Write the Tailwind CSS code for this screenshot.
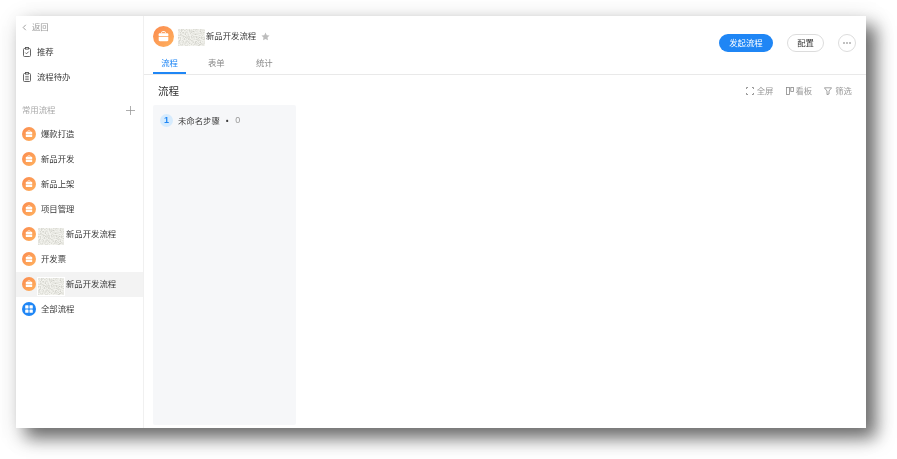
<!DOCTYPE html>
<html lang="zh">
<head>
    <meta charset="UTF-8">
    <title>流程</title>
    <script src="https://cdn.jsdelivr.net/npm/@tailwindcss/browser@4"></script>
</head>
<body class="bg-white w-[897px] h-[459px] overflow-hidden font-['Noto_Sans_CJK_SC','Noto_Sans',sans-serif]">
    <svg class="absolute w-0 h-0">
        <defs>
            <filter id="noise" x="0" y="0" width="100%" height="100%"><feTurbulence type="fractalNoise" baseFrequency="0.8" numOctaves="2" seed="4"/><feColorMatrix values="0 0 0 0 0.6 0 0 0 0 0.6 0 0 0 0 0.55 2.2 0 0 0 -0.85"/></filter>
            <linearGradient id="orange" x1="0" y1="0" x2="1" y2="1"><stop offset="0" stop-color="#fb8a4e"/><stop offset="1" stop-color="#ffb25f"/></linearGradient>
            <g id="case">
                <circle cx="12" cy="12" r="12" fill="url(#orange)"/>
                <path d="M9.800 8.200V7.400c0-.6.4-1 1-1h2.400c.6 0 1 .4 1 1v.8" fill="none" stroke="#fff" stroke-width="1.100"/>
                <path d="M6.500 9.500c0-.7.5-1.200 1.200-1.200h8.600c.7 0 1.200.5 1.200 1.200v2.300h-11z" fill="#fff"/>
                <path d="M6.500 12.700h11v3.400c0 .7-.5 1.200-1.200 1.200H7.700c-.7 0-1.200-.5-1.200-1.200z" fill="#fff"/>
            </g>
        </defs>
    </svg>

    <div class="mt-[16px] ml-[16px] w-[850px] h-[412px] bg-white flex shadow-[10px_10px_16px_rgba(0,0,0,0.52),4px_6px_24px_rgba(0,0,0,0.16)] text-[#3a3a3a] text-[8.4px] leading-[25px]">

        <!-- sidebar -->
        <aside class="w-[128px] shrink-0 border-r border-[#f0f0f0] flex flex-col blur-[0.4px]">
            <div class="h-[25px] mt-[-1px] pb-[1px] pl-[6px] flex items-center text-[#999]">
                <svg class="w-[5px] h-[7px] mr-[5px]" viewBox="0 0 5 7" fill="none" stroke="#888" stroke-width="0.8"><path d="M3.800.8 1.200 3.500l2.600 2.700"/></svg>
                <span class="mb-[2px]">返回</span>
            </div>
            <div class="h-[25px] pb-[1px] pl-[7px] flex items-center gap-[6px]">
                <svg class="w-[8px] h-[10px]" viewBox="0 0 8 10" fill="none" stroke="#555" stroke-width="0.9"><rect x=".5" y="1.500" width="7" height="8" rx="1"/><rect x="2.500" y=".5" width="3" height="1.600" fill="#fff"/><path d="m2.300 5.600 1.200 1.200 2.200-2.200"/></svg>
                <span class="mb-[2px]">推荐</span>
            </div>
            <div class="h-[25px] pb-[1px] pl-[7px] flex items-center gap-[6px]">
                <svg class="w-[8px] h-[10px]" viewBox="0 0 8 10" fill="none" stroke="#555" stroke-width="0.9"><rect x=".5" y="1.500" width="7" height="8" rx="1"/><rect x="2.500" y=".5" width="3" height="1.600" fill="#fff"/><path d="M2.200 4.400h3.600M2.200 6h3.600M2.200 7.600h3.600" stroke-width="0.7"/></svg>
                <span class="mb-[2px]">流程待办</span>
            </div>
            <div class="h-[25px] mt-[8px] pb-[1px] pl-[6px] pr-[8px] flex items-center justify-between text-[#aaa]">
                <span class="mb-[2px]">常用流程</span>
                <svg class="w-[9px] h-[9px]" viewBox="0 0 9 9" stroke="#999" stroke-width="0.8"><path d="M4.500 0v9M0 4.500h9"/></svg>
            </div>
            <div class="h-[25px] mt-[-1px] pb-[1px] pl-[6px] flex items-center gap-[5px]"><svg class="w-[14px] h-[14px]" viewBox="0 0 24 24"><use href="#case"/></svg><span class="mb-[2px]">爆款打造</span></div>
            <div class="h-[25px] pb-[1px] pl-[6px] flex items-center gap-[5px]"><svg class="w-[14px] h-[14px]" viewBox="0 0 24 24"><use href="#case"/></svg><span class="mb-[2px]">新品开发</span></div>
            <div class="h-[25px] pb-[1px] pl-[6px] flex items-center gap-[5px]"><svg class="w-[14px] h-[14px]" viewBox="0 0 24 24"><use href="#case"/></svg><span class="mb-[2px]">新品上架</span></div>
            <div class="h-[25px] pb-[1px] pl-[6px] flex items-center gap-[5px]"><svg class="w-[14px] h-[14px]" viewBox="0 0 24 24"><use href="#case"/></svg><span class="mb-[2px]">项目管理</span></div>
            <div class="h-[25px] pb-[1px] pl-[6px] flex items-center">
                <svg class="w-[14px] h-[14px]" viewBox="0 0 24 24"><use href="#case"/></svg>
                <svg class="w-[26px] h-[17px] ml-[2px] mr-[2px] mt-[4px] bg-[#f3f3ee]"><rect width="26" height="17" filter="url(#noise)"/></svg>
                <span class="mb-[2px]">新品开发流程</span>
            </div>
            <div class="h-[25px] pb-[1px] pl-[6px] flex items-center gap-[5px]"><svg class="w-[14px] h-[14px]" viewBox="0 0 24 24"><use href="#case"/></svg><span class="mb-[2px]">开发票</span></div>
            <div class="h-[25px] pb-[1px] pl-[6px] flex items-center bg-[#f3f3f3]">
                <svg class="w-[14px] h-[14px]" viewBox="0 0 24 24"><use href="#case"/></svg>
                <svg class="w-[26px] h-[17px] ml-[2px] mr-[2px] mt-[4px] bg-[#f3f3ee] outline outline-white"><rect width="26" height="17" filter="url(#noise)"/></svg>
                <span class="mb-[2px]">新品开发流程</span>
            </div>
            <div class="h-[25px] pb-[1px] pl-[6px] flex items-center gap-[5px]">
                <svg class="w-[14px] h-[14px]" viewBox="0 0 14 14"><circle cx="7" cy="7" r="7" fill="#1f86f5"/><rect x="3.200" y="3.200" width="3.300" height="3.300" rx=".6" fill="#fff"/><rect x="7.500" y="3.200" width="3.300" height="3.300" rx=".6" fill="#fff"/><rect x="3.200" y="7.500" width="3.300" height="3.300" rx=".6" fill="#fff"/><rect x="7.500" y="7.500" width="3.300" height="3.300" rx=".6" fill="#fff"/></svg>
                <span class="mb-[2px]">全部流程</span>
            </div>
        </aside>

        <!-- main -->
        <main class="flex-1 flex flex-col min-w-0 blur-[0.4px]">
            <header class="h-[59px] shrink-0 border-b border-[#e9e9e9] pl-[9px] pr-[10px] flex justify-between">
                <div>
                    <div class="h-[21px] mt-[10px] flex items-center">
                        <svg class="w-[21px] h-[21px]" viewBox="0 0 24 24"><use href="#case"/></svg>
                        <svg class="w-[27px] h-[17px] ml-[4px] mt-[2px] bg-[#f3f3ee]"><rect width="27" height="17" filter="url(#noise)"/></svg>
                        <span class="ml-[1px] mb-[2px]">新品开发流程</span>
                        <svg class="w-[9px] h-[9px] ml-[5px]" viewBox="0 0 24 24" fill="#bdbdbd"><path d="m12 1.500 3.300 6.900 7.400 1-5.400 5.200 1.300 7.500L12 18.500l-6.600 3.600 1.300-7.500L1.300 9.400l7.400-1z"/></svg>
                    </div>
                    <nav class="flex mt-[5px] h-[22px]">
                        <div class="w-[33px] text-center text-[#1f86f5] border-b-2 border-[#1f86f5] leading-[20px]">流程</div>
                        <div class="w-[47px] pl-[22px] text-[#888] leading-[20px] whitespace-nowrap">表单</div>
                        <div class="w-[47px] pl-[23px] text-[#888] leading-[20px] whitespace-nowrap">统计</div>
                    </nav>
                </div>
                <div class="flex items-start pt-[18px]">
                    <button class="w-[54px] h-[18px] rounded-full bg-[#1f86f5] text-white leading-[16px] pb-[2px]">发起流程</button>
                    <button class="w-[37px] h-[18px] ml-[14px] rounded-full border border-[#dcdcdc] text-[#3a3a3a] leading-[14px] pb-[2px]">配置</button>
                    <button class="w-[18px] h-[18px] ml-[14px] rounded-full border border-[#dcdcdc] flex items-center justify-center">
                        <svg class="w-[8px] h-[2px]" viewBox="0 0 8 2" fill="#555"><circle cx="1" cy="1" r=".7"/><circle cx="4" cy="1" r=".7"/><circle cx="7" cy="1" r=".7"/></svg>
                    </button>
                </div>
            </header>

            <div class="h-[30px] shrink-0 pl-[14px] pr-[14px] flex items-center justify-between">
                <h2 class="text-[10.6px] text-[#333]">流程</h2>
                <div class="flex items-center text-[#999]">
                    <svg class="w-[8px] h-[8px] mt-[1px] mr-[3px]" viewBox="0 0 8 8" fill="none" stroke="#8a8a8a" stroke-width="0.9"><path d="M.5 2V.5H2M6 .5h1.500V2M7.500 6v1.500H6M2 7.500H.5V6"/></svg>
                    <span>全屏</span>
                    <svg class="w-[8px] h-[8px] mt-[1px] ml-[12px] mr-[2px]" viewBox="0 0 8 8" fill="none" stroke="#8a8a8a" stroke-width="0.8"><rect x=".5" y=".5" width="3" height="7"/><rect x="4.800" y=".5" width="2.700" height="4"/></svg>
                    <span>看板</span>
                    <svg class="w-[8px] h-[8px] mt-[1px] ml-[12px] mr-[3px]" viewBox="0 0 8 8" fill="none" stroke="#8a8a8a" stroke-width="0.8"><path d="M.4.8h7.200L5 4v3L3 7.600V4z"/></svg>
                    <span>筛选</span>
                </div>
            </div>

            <div class="flex-1 pl-[9px] pb-[3px] min-h-0">
                <div class="w-[143px] h-full bg-[#f6f7f9] rounded-[2px] pl-[7px] pt-[9px]">
                    <div class="flex items-center h-[13px]">
                        <div class="w-[13px] h-[13px] rounded-full bg-[#d6ebfd] text-[#1f86f5] font-['Liberation_Sans'] font-bold text-[9px] leading-[13px] text-center">1</div>
                        <span class="ml-[5px] mb-[1px]">未命名步骤</span>
                        <span class="ml-[3px] font-bold">·</span>
                        <span class="ml-[4px] text-[#999] font-['Liberation_Sans'] text-[9px]">0</span>
                    </div>
                </div>
            </div>
        </main>
    </div>
</body>
</html>
